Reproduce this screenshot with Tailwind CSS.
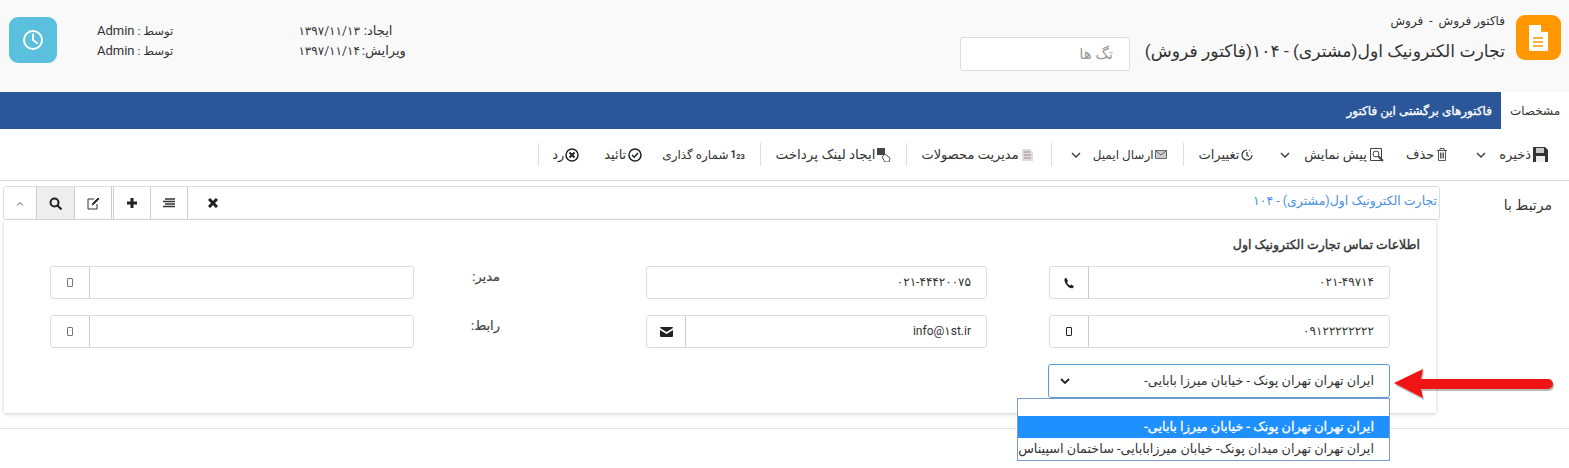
<!DOCTYPE html>
<html lang="fa" dir="rtl">
<head>
    <meta charset="UTF-8">
    <title>فاکتور فروش</title>
    <script src="https://cdn.jsdelivr.net/npm/@tailwindcss/browser@4"></script>
</head>
<body class="relative h-[468px] w-[1569px] overflow-hidden bg-white font-['Roboto','DejaVu_Sans',sans-serif] text-[13px] text-[#333]">
    <!-- Header -->
    <header class="flex h-[92px] bg-[#f9f9f9]">
        <div class="mr-[8px] mt-[15px] flex h-[45px] w-[45px] items-center justify-center rounded-[9px] bg-[#ff9800]">
            <svg width="20" height="26" viewBox="0 0 20 26"><path d="M1 0h11l7 7v18a1 1 0 0 1-1 1H1a1 1 0 0 1-1-1V1a1 1 0 0 1 1-1z" fill="#fff"/><path d="M12.500 0v6.500H19" fill="#ff9800" stroke="#ff9800" stroke-width=".8"/><path d="M4 13h10M4 17h10M4 21h10" stroke="#ff9800" stroke-width="1.600"/></svg>
        </div>
        <div class="mr-[11px] w-[360px]">
            <div class="mt-[13px] text-[12px] leading-[16px]">فاکتور فروش &nbsp;-&nbsp; فروش</div>
            <h1 class="mt-[10px] text-[17.2px] font-normal leading-[24px] whitespace-nowrap">تجارت الکترونیک اول(مشتری) - ۱۰۴(فاکتور فروش)</h1>
        </div>
        <div class="mr-[15px] mt-[37px] flex h-[34px] w-[170px] items-center rounded-[3px] border border-[#ddd] bg-white pr-[16px] text-[15px] text-[#999]">تگ ها</div>
        <div class="mr-auto mt-[21px] w-[101px] text-[12px] leading-[20px] whitespace-nowrap">
            <div class="flex justify-end"><span class="text-[13px]">ایجاد:</span><span class="mr-[4px] tracking-[-1px]">۱۳۹۷/۱۱/۱۳</span></div>
            <div class="flex justify-end"><span class="text-[13px]">ویرایش:</span><span class="mr-[2px] tracking-[-1px]">۱۳۹۷/۱۱/۱۴</span></div>
        </div>
        <div class="mr-[125px] mt-[21px] text-[11.7px] leading-[20px]">
            <div>توسط : <span class="text-[13px]">Admin</span></div>
            <div>توسط : <span class="text-[13px]">Admin</span></div>
        </div>
        <div class="mr-[40px] ml-[9px] mt-[17px] flex h-[46px] w-[48px] items-center justify-center rounded-[9px] bg-[#5bc0de]">
            <svg width="22" height="22" viewBox="0 0 22 22" fill="none" stroke="#fff" stroke-width="2"><circle cx="11" cy="11" r="9"/><path d="M11 5.500V11l4 3" stroke-linecap="round"/></svg>
        </div>
    </header>

    <!-- Tabs -->
    <nav class="flex h-[37px] bg-[#2b579a] text-[12px]">
        <div class="flex w-[68px] items-center justify-center bg-white">مشخصات</div>
        <div class="flex items-center pr-[9px] text-white [-webkit-text-stroke:0.3px_#fff]">فاکتورهای برگشتی این فاکتور</div>
    </nav>

    <!-- Toolbar -->
    <div class="flex h-[52px] items-center border-b border-[#ddd] pr-[21px]">
        <svg class="ml-[2px]" width="15" height="15" viewBox="0 0 15 15"><path d="M0 0h12l3 3v12H0z" fill="#333"/><path d="M3 1h8v5H3z" fill="#ccc"/><path d="M3 9h9v6H3z" fill="#eee"/></svg>
        <span>ذخیره</span>
        <svg class="mr-[13px]" width="10" height="6" viewBox="0 0 10 6" fill="none" stroke="#444" stroke-width="1.500"><path d="M1 1l4 4 4-4"/></svg>
        <svg class="mr-[29px] ml-[3px]" width="10" height="13" viewBox="0 0 10 13" fill="none" stroke="#555"><path d="M0 2.500h10M3 2.500V.5h4v2M1.500 2.500v10h7v-10M3.500 4.500v6M5 4.500v6M6.500 4.500v6"/></svg>
        <span>حذف</span>
        <svg class="mr-[22px] ml-[3px]" width="14" height="14" viewBox="0 0 14 14" fill="none" stroke="#444"><path d="M.5.5h11v12H.5z"/><circle cx="6" cy="6" r="3"/><path d="M8 8l5 5" stroke-width="2"/></svg>
        <span>پیش نمایش</span>
        <svg class="mr-[14px]" width="10" height="6" viewBox="0 0 10 6" fill="none" stroke="#444" stroke-width="1.500"><path d="M1 1l4 4 4-4"/></svg>
        <svg class="mr-[27px] ml-[2px]" width="12" height="12" viewBox="0 0 12 12" fill="none" stroke="#333" stroke-width="1.200"><path d="M6 1a5 5 0 1 0 5 5"/><path d="M6 3v3.500l2 1"/><path d="M8.500 1.500l.5.5M10.500 3.500l.3.500" stroke-dasharray="1 1"/></svg>
        <span>تغییرات</span>
        <div class="mr-[15px] h-[23px] w-px bg-[#ddd]"></div>
        <svg class="mr-[16px] ml-[1px]" width="12" height="9" viewBox="0 0 12 9" fill="#ccc" stroke="#666"><path d="M.5.500h11v8H.5z"/><path d="M.5.500L6 5l5.500-4.500" fill="none"/></svg>
        <span class="text-[12px]">ارسال ایمیل</span>
        <svg class="mr-[12px]" width="10" height="6" viewBox="0 0 10 6" fill="none" stroke="#444" stroke-width="1.500"><path d="M1 1l4 4 4-4"/></svg>
        <div class="mr-[19px] h-[23px] w-px bg-[#ddd]"></div>
        <svg class="mr-[18px] ml-[3px]" width="11" height="12" viewBox="0 0 11 12"><path d="M0 0h8l3 3v9H0z" fill="#ddd"/><path d="M2 3h6M2 6h7M2 9h7" stroke="#a88"/></svg>
        <span>مدیریت محصولات</span>
        <div class="mr-[14px] h-[23px] w-px bg-[#ddd]"></div>
        <svg class="mr-[15px] ml-[2px]" width="14" height="14" viewBox="0 0 14 14"><path d="M0 0h8v7H0z" fill="#444"/><path d="M8 6l5 4-1 4H8L5 9z" fill="#fff" stroke="#555"/></svg>
        <span class="text-[13.5px]">ایجاد لینک پرداخت</span>
        <div class="mr-[15px] h-[23px] w-px bg-[#ddd]"></div>
        <span class="mr-[14px] ml-[2px] w-[15px] text-[10px] font-bold leading-none" dir="ltr">1<sub>2</sub><sub>3</sub></span>
        <span class="text-[12px]">شماره گذاری</span>
        <svg class="mr-[20px] ml-[2px]" width="14" height="14" viewBox="0 0 14 14" fill="none" stroke="#222" stroke-width="1.500"><circle cx="7" cy="7" r="6"/><path d="M4 7l2.200 2.200L10 5"/></svg>
        <span>تائید</span>
        <svg class="mr-[25px] ml-[1px]" width="14" height="14" viewBox="0 0 14 14" fill="none" stroke="#222" stroke-width="1.500"><circle cx="7" cy="7" r="6"/><path d="M4.500 4.500l5 5M9.500 4.500l-5 5" stroke-width="2"/></svg>
        <span>رد</span>
        <div class="mr-[13px] h-[23px] w-px bg-[#ddd]"></div>
    </div>

    <!-- Related to -->
    <div class="flex pt-[5px]">
        <div class="w-[129px] pr-[17px] pt-[9px] text-[14px]">مرتبط با</div>
        <div class="w-[1437px]">
            <div class="flex h-[34px] items-stretch rounded-[3px] border border-[#ddd] text-[#4a90e2]">
                <div class="flex-1 pr-[2px] pt-[5px] text-[12.5px]">تجارت الکترونیک اول(مشتری) - ۱۰۴</div>
                <div class="flex w-[50px] items-center justify-center"><svg width="10" height="10" viewBox="0 0 10 10" stroke="#222" stroke-width="3"><path d="M1 1l8 8M9 1l-8 8"/></svg></div>
                <div class="flex w-[38px] items-center justify-center border-x border-[#ccc]"><svg width="14" height="10" viewBox="0 0 14 10" stroke="#333"><path d="M3 1h10M1 3.500h12M3 6h10M1 8.500h12" stroke-width="1.500"/></svg></div>
                <div class="flex w-[37px] items-center justify-center border-l border-[#ccc]"><svg width="12" height="12" viewBox="0 0 12 12" stroke="#222" stroke-width="3"><path d="M6 1v10M1 6h10"/></svg></div>
                <div class="mr-[1px] flex w-[38px] items-center justify-center border-x border-[#ccc]"><svg width="13" height="13" viewBox="0 0 13 13" fill="none" stroke="#333"><path d="M10 7v5H1V2h6"/><path d="M5 8l1-2 5-5 1 1-5 5z" fill="#333"/></svg></div>
                <div class="flex w-[38px] items-center justify-center border-l border-[#ccc] bg-[#eee]"><svg width="13" height="13" viewBox="0 0 13 13" fill="none" stroke="#222" stroke-width="2"><circle cx="5.500" cy="5.500" r="4"/><path d="M8.500 8.500l4 4"/></svg></div>
                <div class="flex w-[32px] items-center justify-center"><svg width="8" height="5" viewBox="0 0 8 5" fill="none" stroke="#555"><path d="M1 4.500l3-3 3 3"/></svg></div>
            </div>
            <div class="mr-[4px] h-[193px] w-[1432px] bg-white px-[46px] pt-[17px] shadow-[0_1px_4px_rgba(0,0,0,0.2)]">
                <h2 class="mr-[-30px] text-[12.5px] font-normal leading-[16px] [-webkit-text-stroke:0.4px_#333]">اطلاعات تماس تجارت الکترونیک اول</h2>
                <div class="mt-[13px] grid grid-cols-[342px_341px_110px_364px] gap-x-[61px] gap-y-[16px] text-[12px]">
                    <div class="ml-[1px] flex h-[33px] rounded-[3px] border border-[#ddd]"><div class="flex-1 px-[15px] leading-[30px] tracking-[-0.45px]">۰۲۱-۴۹۷۱۴</div><div class="flex w-[39px] items-center justify-center border-r border-[#ccc]"><svg width="12" height="12" viewBox="0 0 24 24" fill="#222"><path d="M6.600 1.500L3 3.500C2 8 5 14 9 18c3 3 6 5 10 4.500l3-3.500-5-4-3 2c-2-1-5-4-6-6l2-3z"/></svg></div></div>
                    <div class="flex h-[33px] rounded-[3px] border border-[#ddd] px-[15px] leading-[30px] tracking-[-0.2px]">۰۲۱-۴۴۴۲۰۰۷۵</div>
                    <div class="pr-[85px] pt-[3px] text-[13px] leading-[16px] whitespace-nowrap text-[#444] [-webkit-text-stroke:0.2px_#444]">مدیر:</div>
                    <div class="flex h-[33px] rounded-[3px] border border-[#ddd]"><div class="flex-1"></div><div class="flex w-[39px] items-center justify-center border-r border-[#ccc]"><svg width="6" height="9" viewBox="0 0 6 9" fill="none" stroke="#777"><rect x=".5" y=".5" width="5" height="8" rx=".5"/></svg></div></div>
                    <div class="ml-[1px] flex h-[33px] rounded-[3px] border border-[#ddd]"><div class="flex-1 px-[15px] leading-[30px] tracking-[-0.6px]">۰۹۱۲۲۲۲۲۲۲۲</div><div class="flex w-[39px] items-center justify-center border-r border-[#ccc]"><svg width="6" height="9" viewBox="0 0 6 9" fill="none" stroke="#222"><rect x=".5" y=".5" width="5" height="8" rx=".5"/></svg></div></div>
                    <div class="flex h-[33px] rounded-[3px] border border-[#ddd]"><div class="flex-1 px-[15px] leading-[30px]">info@۱st.ir</div><div class="flex w-[39px] items-center justify-center border-r border-[#ccc]"><svg width="13" height="10" viewBox="0 0 13 10"><path d="M0 1a1 1 0 0 1 1-1h11a1 1 0 0 1 1 1L6.500 5zM0 3l6.500 4L13 3v6a1 1 0 0 1-1 1H1a1 1 0 0 1-1-1z" fill="#222"/></svg></div></div>
                    <div class="pr-[85px] pt-[3px] text-[13px] leading-[16px] whitespace-nowrap text-[#444] [-webkit-text-stroke:0.2px_#444]">رابط:</div>
                    <div class="flex h-[33px] rounded-[3px] border border-[#ddd]"><div class="flex-1"></div><div class="flex w-[39px] items-center justify-center border-r border-[#ccc]"><svg width="6" height="9" viewBox="0 0 6 9" fill="none" stroke="#777"><rect x=".5" y=".5" width="5" height="8" rx=".5"/></svg></div></div>
                    <!-- Address select with open list -->
                    <div class="relative flex h-[34px] items-center justify-between rounded-[3px] border border-[#5b9bd5] pl-[11px] pr-[15px] text-[12.8px]">
                        <span>ایران تهران تهران پونک - خیابان میرزا بابایی-</span>
                        <svg width="10" height="7" viewBox="0 0 10 7" fill="none" stroke="#222" stroke-width="1.800"><path d="M1 1l4 4 4-4"/></svg>
                        <div class="absolute right-[-1px] top-[33px] z-10 w-[373px] border border-[#7a9cd3] bg-white">
                            <div class="h-[17px]"></div>
                            <div class="h-[22px] bg-[#1e90ff] pr-[15px] leading-[22px] text-white [-webkit-text-stroke:0.3px_#fff]">ایران تهران تهران پونک - خیابان میرزا بابایی-</div>
                            <div class="h-[22px] pr-[15px] leading-[22px] whitespace-nowrap">ایران تهران تهران میدان پونک- خیابان میرزابابایی- ساختمان اسپیناس</div>
                        </div>
                    </div>
                </div>
            </div>
        </div>
    </div>
    <div class="mt-[15px] border-t border-[#e5e5e5]"></div>

    <!-- Red arrow pointing at the address select -->
    <svg class="absolute left-[1390px] top-[362px] z-20" width="170" height="46" viewBox="0 0 170 46"><path d="M4 21L33 7l-2 10h127a5 5 0 0 1 0 10H31l2 9z" fill="#555" opacity=".4" transform="translate(1 2)"/><path d="M4 21L33 7l-2 10h127a5 5 0 0 1 0 10H31l2 9z" fill="#f01414"/></svg>
</body>
</html>
